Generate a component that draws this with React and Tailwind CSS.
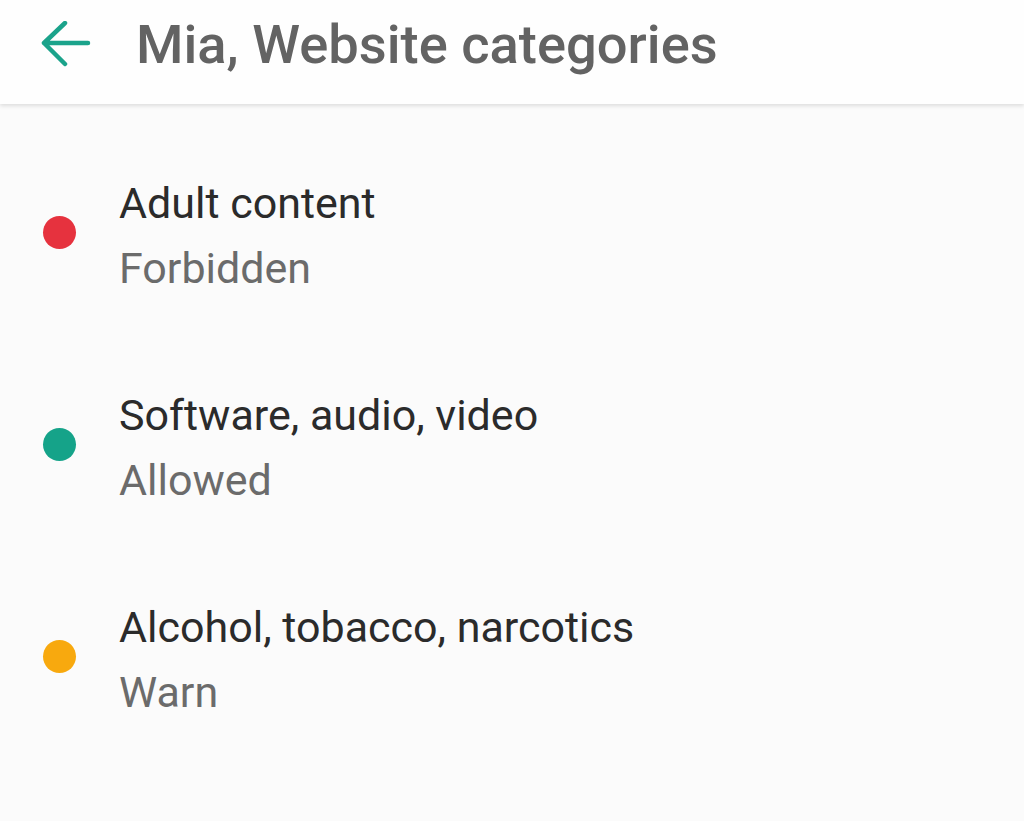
const categories = [
  { name: "Adult content", status: "Forbidden", color: "bg-[#e6323e]" },
  { name: "Software, audio, video", status: "Allowed", color: "bg-[#15a389]" },
  { name: "Alcohol, tobacco, narcotics", status: "Warn", color: "bg-[#f8a90e]" },
  { name: "Violence", status: "Allowed", color: "bg-[#15a389]" },
];

function BackArrow() {
  return (
    <svg width="52" height="48" viewBox="0 0 52 48" fill="none" className="shrink-0">
      <path
        d="M4 22H48M25 2L4 22L25 43"
        stroke="#1ba38b"
        strokeWidth="4.5"
        strokeLinecap="round"
        strokeLinejoin="round"
      />
    </svg>
  );
}

export default function App() {
  return (
    <div
      className="h-[821px] w-full overflow-hidden bg-[#fbfbfb]"
      style={{ fontFamily: "Roboto, 'Noto Sans', sans-serif" }}
    >
      <header className="relative z-10 flex h-[104px] items-center bg-[#fefefe] pb-[14px] pl-[40px] shadow-[0_2px_4px_rgba(0,0,0,0.12)]">
        <BackArrow />
        <h1 className="ml-[44px] text-[54.3px] font-medium leading-none text-[#636363]">
          Mia, Website categories
        </h1>
      </header>

      <ul className="pt-[26px]">
        {categories.map((item) => (
          <li key={item.name} className="flex h-[212px] items-center pl-[43px]">
            <span className={`mb-2 h-[33px] w-[33px] shrink-0 rounded-full ${item.color}`} />
            <div className="ml-[43px]">
              <p className="text-[43px] leading-[65px] text-[#2b2b2b]">{item.name}</p>
              <p className="text-[43px] leading-[65px] text-[#6b6b6b]">{item.status}</p>
            </div>
          </li>
        ))}
      </ul>
    </div>
  );
}
